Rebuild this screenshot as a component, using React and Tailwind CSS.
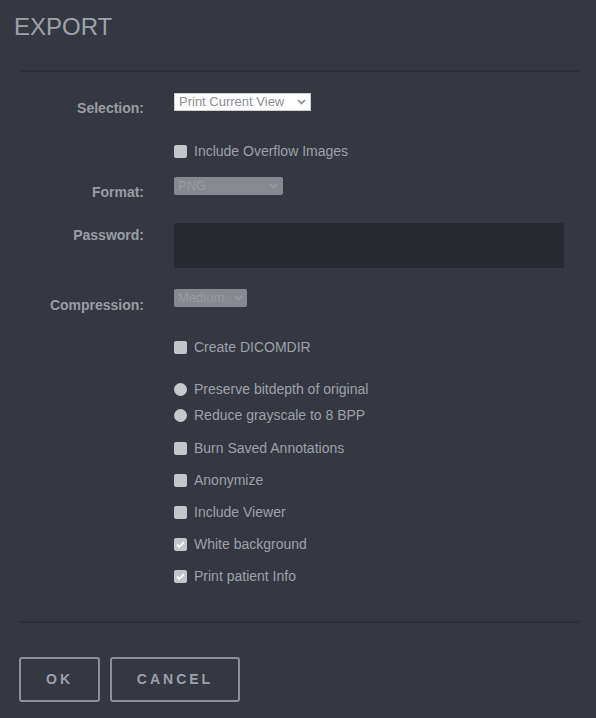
import React from 'react'

const font = { fontFamily: '"Liberation Sans", Arial, sans-serif' }

function Chevron({ className = '' }) {
  return (
    <svg width="9" height="6" viewBox="0 0 9 6" className={className}>
      <path d="M1 1l3.5 3.5L8 1" fill="none" stroke="currentColor" strokeWidth="1.7" />
    </svg>
  )
}

function Check({ checked, label }) {
  return (
    <div className="flex items-center h-5">
      <span className="w-[13px] h-[13px] rounded-[2px] bg-[#c4c5c8] flex items-center justify-center">
        {checked && (
          <svg width="11" height="11" viewBox="0 0 11 11">
            <path d="M2 5.6l2.3 2.3L9 3" fill="none" stroke="#ffffff" strokeWidth="1.8" />
          </svg>
        )}
      </span>
      <span className="ml-[7px] text-[14px] text-[#9ea1a8]">{label}</span>
    </div>
  )
}

function Radio({ label }) {
  return (
    <div className="flex items-center h-5">
      <span className="w-[13px] h-[13px] rounded-full bg-[#c8c9cc]" />
      <span className="ml-[7px] text-[14px] text-[#9ea1a8]">{label}</span>
    </div>
  )
}

function Label({ children, top }) {
  return (
    <div className={`w-[125px] text-right text-[14px] leading-4 font-bold text-[#9a9da3] ${top}`}>
      {children}
    </div>
  )
}

export default function App() {
  return (
    <div className="w-[596px] h-[718px] bg-[#353841] overflow-hidden" style={font}>
      <h1 className="pl-[14px] pt-[13px] text-[24px] leading-7 text-[#9ea3aa]">EXPORT</h1>
      <div className="ml-[19px] mr-[17px] mt-[29px] h-[2px] bg-[#2c2f37]" />

      <div className="px-[19px]">
        {/* Selection */}
        <div className="flex mt-[21px]">
          <Label top="mt-[7px]">Selection:</Label>
          <div className="ml-[30px] h-[18px] w-[137px] bg-white border border-[#d0d0d0] flex items-center justify-between px-[4px] text-[13px] text-[#8b8e94]">
            <span>Print Current View</span>
            <Chevron className="text-[#8b8e94]" />
          </div>
        </div>

        <div className="flex mt-[25px]">
          <div className="w-[125px]" />
          <div className="ml-[30px]">
            <Check label="Include Overflow Images" />
          </div>
        </div>

        {/* Format */}
        <div className="flex mt-[16px]">
          <Label top="mt-[7px]">Format:</Label>
          <div className="ml-[30px] h-[18px] w-[109px] rounded-[2px] bg-[#86898f] flex items-center justify-between pl-[4px] pr-[5px] text-[13px] text-[#9a9da2]">
            <span>PNG</span>
            <Chevron className="text-[#9a9da2]" />
          </div>
        </div>

        {/* Password */}
        <div className="flex mt-[23px]">
          <Label top="mt-[4px]">Password:</Label>
          <div className="ml-[30px] h-[45px] w-[390px] rounded-[3px] bg-[#262930]" />
        </div>

        {/* Compression */}
        <div className="flex mt-[21px]">
          <Label top="mt-[8px]">Compression:</Label>
          <div className="ml-[30px] h-[18px] w-[73px] rounded-[2px] bg-[#86898f] flex items-center justify-between pl-[4px] pr-[4px] text-[13px] text-[#9a9da2]">
            <span>Medium</span>
            <Chevron className="text-[#9a9da2]" />
          </div>
        </div>

        <div className="ml-[155px] flex flex-col">
          <div className="mt-[24px]"><Check label="Create DICOMDIR" /></div>
          <div className="mt-[22px]"><Radio label="Preserve bitdepth of original" /></div>
          <div className="mt-[6px]"><Radio label="Reduce grayscale to 8 BPP" /></div>
          <div className="mt-[13px]"><Check label="Burn Saved Annotations" /></div>
          <div className="mt-[12px]"><Check label="Anonymize" /></div>
          <div className="mt-[12px]"><Check label="Include Viewer" /></div>
          <div className="mt-[12px]"><Check checked label="White background" /></div>
          <div className="mt-[12px]"><Check checked label="Print patient Info" /></div>
        </div>
      </div>

      <div className="ml-[19px] mr-[17px] mt-[35px] h-[2px] bg-[#2c2f37]" />

      <div className="px-[19px] mt-[34px] flex gap-[10px]">
        <button className="w-[81px] h-[45px] border-2 border-[#8b909c] rounded-[3px] text-[14px] font-bold tracking-[3px] text-[#9ba0aa]">
          OK
        </button>
        <button className="w-[130px] h-[45px] border-2 border-[#8b909c] rounded-[3px] text-[14px] font-bold tracking-[3px] text-[#9ba0aa]">
          CANCEL
        </button>
      </div>
    </div>
  )
}
